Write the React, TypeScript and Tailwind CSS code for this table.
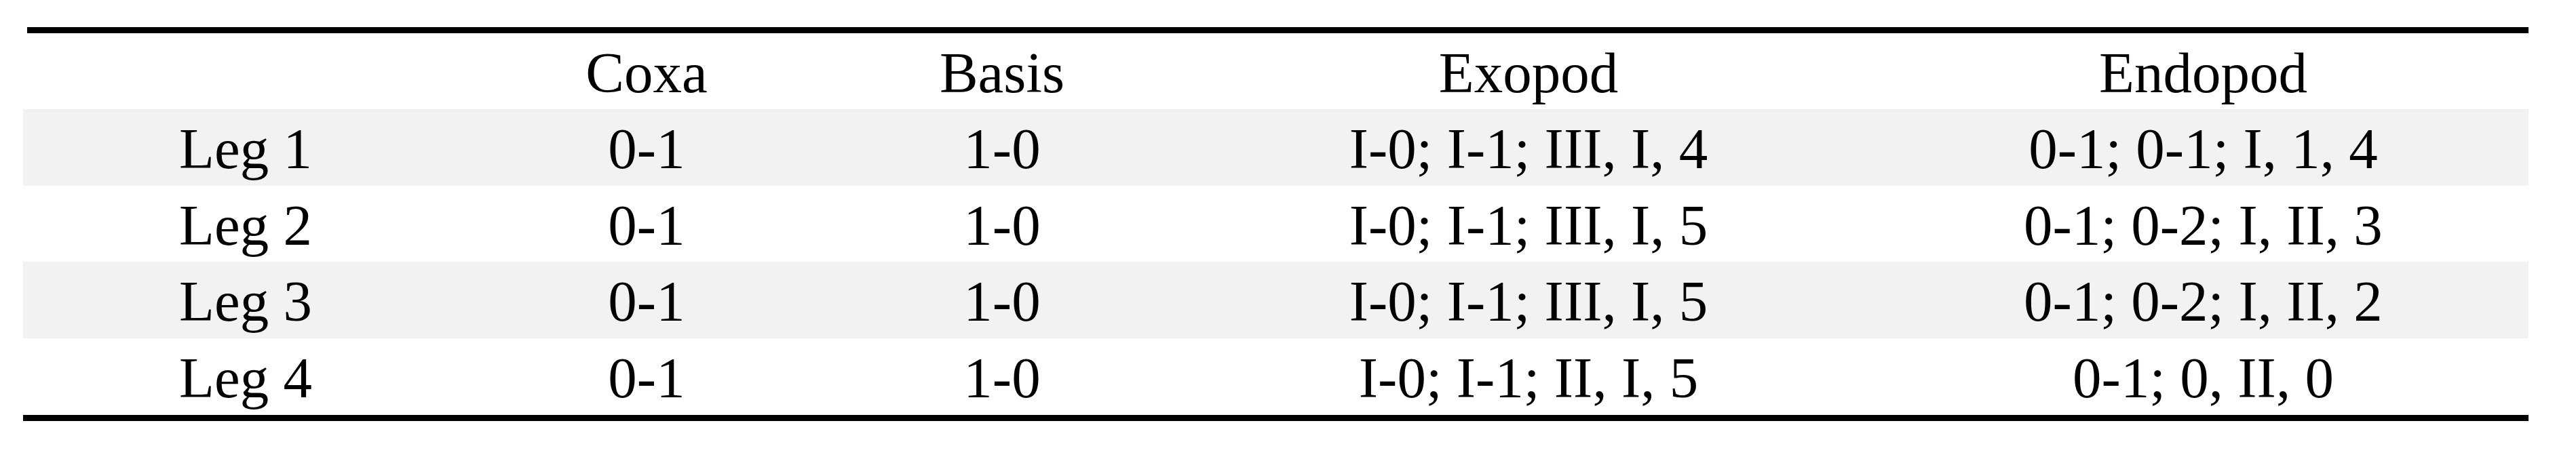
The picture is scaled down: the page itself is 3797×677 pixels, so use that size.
const columns = ['', 'Coxa', 'Basis', 'Exopod', 'Endopod'];

const rows = [
  { cells: ['Leg 1', '0-1', '1-0', 'I-0; I-1; III, I, 4', '0-1; 0-1; I, 1, 4'], shaded: true, h: 'h-[113px] leading-[113px]' },
  { cells: ['Leg 2', '0-1', '1-0', 'I-0; I-1; III, I, 5', '0-1; 0-2; I, II, 3'], shaded: false, h: 'h-[112px] leading-[112px]' },
  { cells: ['Leg 3', '0-1', '1-0', 'I-0; I-1; III, I, 5', '0-1; 0-2; I, II, 2'], shaded: true, h: 'h-[113px] leading-[113px]' },
  { cells: ['Leg 4', '0-1', '1-0', 'I-0; I-1; II, I, 5', '0-1; 0, II, 0'], shaded: false, h: 'h-[113px] leading-[113px]' },
];

const grid = 'grid grid-cols-[656px_526px_522px_1030px_959px]';

export default function App() {
  return (
    <div
      className="w-[3797px] h-[677px] bg-white pt-[40px] pl-[34px] text-black text-[85px]"
      style={{ fontFamily: '"Liberation Serif", "Times New Roman", serif' }}
    >
      <div className="w-[3693px]">
        <div className="ml-[6px] h-[9px] bg-black" />
        <div className={`${grid} h-[112px] leading-[112px] pt-[2px]`}>
          {columns.map((c, i) => (
            <div key={i} className="text-center whitespace-nowrap">
              {c}
            </div>
          ))}
        </div>
        {rows.map((row) => (
          <div
            key={row.cells[0]}
            className={`${grid} ${row.h} pt-[2px] ${row.shaded ? 'bg-[#f2f2f2]' : ''}`}
          >
            {row.cells.map((c, i) => (
              <div key={i} className="text-center whitespace-nowrap">
                {c}
              </div>
            ))}
          </div>
        ))}
        <div className="h-[9px] bg-black" />
      </div>
    </div>
  );
}
